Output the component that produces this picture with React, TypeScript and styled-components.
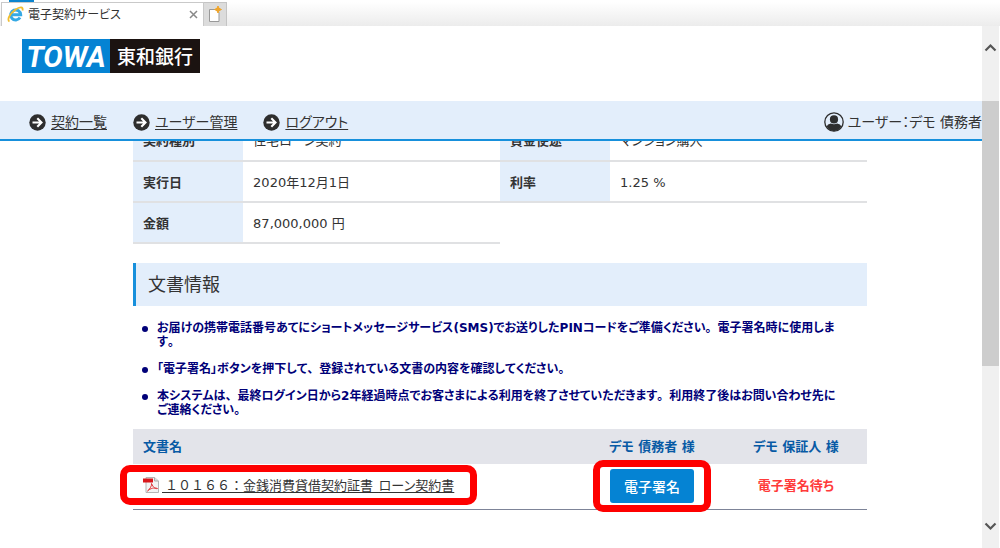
import React from "react";
import styled, { createGlobalStyle } from "styled-components";

const GlobalStyle = createGlobalStyle`
  * { box-sizing: border-box; }
  body {
    margin: 0;
    background: #fff;
    color: #333;
    font-family: "DejaVu Sans", "Noto Sans CJK JP", sans-serif;
    font-feature-settings: "palt";
    font-size: 13px;
    line-height: 16px;
  }
`;

const Browser = styled.div`
  display: flex;
  flex-direction: column;
  min-height: 100vh;
  overflow: hidden;
`;

const TabStrip = styled.div`
  position: relative;
  display: flex;
  align-items: flex-end;
  height: 26px;
  padding-left: 1px;
  background: linear-gradient(#fff 2px, #ececec);
`;

const WindowAccent = styled.span`
  position: absolute;
  top: 0;
  left: 9px;
  width: 25px;
  height: 2px;
  background: #0a84cf;
`;

const Tab = styled.div`
  display: flex;
  align-items: center;
  gap: 4px;
  width: 203px;
  height: 24px;
  padding: 0 5px;
  border: 1px solid #c9c9c9;
  border-bottom: 0;
  background: #fff;
  font-size: 12px;
`;

const TabTitle = styled.span`
  flex: 1;
  white-space: nowrap;
`;

const IconButton = styled.button`
  display: flex;
  align-items: center;
  justify-content: center;
  padding: 0;
  border: 0;
  background: transparent;
`;

const NewTab = styled(IconButton)`
  width: 23px;
  height: 24px;
  border: 1px solid #c4c4c4;
  border-left: 0;
  border-bottom: 0;
  background: #dcdcdc;
`;

const Viewport = styled.div`
  display: flex;
  flex: 1;
`;

const Page = styled.div`
  flex: 1;
  min-width: 0;
`;

const Header = styled.header`
  height: 75px;
  padding: 13px 22px;
`;

const Logo = styled.a`
  display: inline-flex;
  height: 34px;
  color: #fff;
  text-decoration: none;
  white-space: nowrap;
`;

const LogoMark = styled.span`
  width: 88px;
  background: #0583d3;
  font: italic bold 29px/36px Roboto, sans-serif;
  text-align: center;
`;

const LogoName = styled.span`
  width: 90px;
  background: #1b1311;
  font: 500 19px/34px "Noto Sans CJK JP", sans-serif;
  text-align: center;
`;

const Nav = styled.nav`
  position: relative;
  z-index: 1;
  display: flex;
  align-items: center;
  gap: 26px;
  height: 40px;
  padding: 4px 0 0 29px;
  border-bottom: 2px solid #1790dc;
  background: #e3eefb;
  font-size: 14px;
  white-space: nowrap;
`;

const NavLink = styled.a`
  display: flex;
  align-items: center;
  gap: 5px;
  color: #333;
  text-underline-offset: 2px;
`;

const User = styled.div`
  display: flex;
  align-items: center;
  gap: 4px;
  margin-left: auto;
`;

const Content = styled.main`
  margin: -21px 115px 38px 133px;
`;

const InfoTable = styled.table`
  width: 100%;
  border-collapse: collapse;
  table-layout: fixed;
  text-align: left;
`;

const cellLine = "2px solid #e0e1e3";

const Label = styled.th`
  height: 41px;
  padding: 2px 10px 0;
  border-bottom: ${cellLine};
  background: #e3eefb;
  font-weight: bold;
`;

const Value = styled.td`
  padding: 2px 10px 0;
  border-bottom: ${cellLine};
`;

const SectionTitle = styled.h2`
  margin: 19px 0 15px;
  padding: 0 12px;
  border-left: 3px solid #1790dc;
  background: #e3eefb;
  font-size: 18px;
  font-weight: normal;
  line-height: 43px;
`;

const Notes = styled.ul`
  display: flex;
  flex-direction: column;
  gap: 13px;
  margin: 0 0 12px;
  padding: 0;
  list-style: none;
  color: #000078;
  font-feature-settings: "palt", "kern" 0;
  font-kerning: none;
  font-size: 12px;
  font-weight: bold;
  line-height: 14px;
`;

const Note = styled.li`
  display: flex;
  gap: 9px;
  padding-left: 9px;
  white-space: nowrap;

  &::before {
    content: "";
    flex: none;
    width: 6px;
    height: 6px;
    margin-top: 5px;
    border-radius: 50%;
    background: #000078;
  }
`;

const Stop = styled.span`
  font-feature-settings: normal;
`;

const Documents = styled.table`
  width: 100%;
  border-collapse: collapse;
  table-layout: fixed;
  border-bottom: 1px solid #7d8498;
`;

const DocHead = styled.th<{ $width?: string }>`
  width: ${(p) => p.$width ?? "auto"};
  height: 35px;
  padding: 0 10px;
  background: #e3e4ea;
  color: #075aa5;
  text-align: center;
  white-space: nowrap;

  &:first-child { text-align: left; }
`;

const DocCell = styled.td`
  height: 45px;
  padding: 0 10px;
  text-align: center;

  &:first-child {
    padding-bottom: 4px;
    text-align: left;
  }
`;

const Marked = styled.span<{ $x: number; $y: number }>`
  position: relative;
  display: inline-flex;
  vertical-align: middle;

  &::after {
    content: "";
    position: absolute;
    inset: ${(p) => -p.$y}px ${(p) => -p.$x}px;
    border: 7px solid #fe0000;
    border-radius: 10px;
    pointer-events: none;
  }
`;

const DocLink = styled.a`
  display: inline-flex;
  align-items: center;
  gap: 2px;
  color: #333;
  font-family: "Noto Sans CJK JP", sans-serif;
  white-space: pre;
  text-underline-offset: 2px;
`;

const DocName = styled.span`
  text-decoration: underline;
`;

const WideDigits = styled.span`
  font-feature-settings: normal;
`;

const SignButton = styled.button`
  width: 84px;
  height: 34px;
  padding: 0;
  border: 0;
  border-radius: 3px;
  background: #0583d3;
  color: #fff;
  font: 500 14px/34px "Noto Sans CJK JP", sans-serif;
`;

const Pending = styled.strong`
  color: #ff3b3b;
`;

const ScrollBar = styled.div`
  display: flex;
  flex-direction: column;
  justify-content: space-between;
  width: 17px;
  margin-right: 1px;
  background: #f0f0f0;
`;

const ScrollArrow = styled(IconButton)`
  height: 43px;
`;

const ScrollThumb = styled.div`
  height: 265px;
  margin: 32px 0 auto;
  background: #cdcdcd;
`;

const IeIcon = () => (
  <svg width="17" height="17" viewBox="0 0 17 17" fill="none" aria-hidden="true">
    <path d="M13 11.500A5 5 0 1 1 13.700 8.800H4.500" stroke="#35a9e4" strokeWidth="3" />
    <path d="M2.500 15.500C-.5 14 3 7.500 8 4S16.500.5 15.500 4.500" stroke="#f0bd2e" strokeWidth="1.800" />
  </svg>
);

const NewTabIcon = () => (
  <svg width="14" height="17" viewBox="0 0 14 17" aria-hidden="true">
    <path d="M1.500 3.500H8l3 3v9H1.500z" fill="#fff" stroke="#999" />
    <path d="M10 0l1 2.300L13.500 3.500 11 4.700 10 7 9 4.700 6.500 3.500 9 2.300z" fill="#efa52b" stroke="#efa52b" />
  </svg>
);

const ArrowIcon = () => (
  <svg width="17" height="17" viewBox="0 0 17 17" fill="none" aria-hidden="true">
    <circle cx="8.500" cy="8.500" r="8.200" fill="#2e2e2e" />
    <path d="M3.500 8.500H12M8.300 4.300l4.200 4.200-4.200 4.200" stroke="#fff" strokeWidth="2.100" />
  </svg>
);

const UserIcon = () => (
  <svg width="20" height="20" viewBox="0 0 20 20" aria-hidden="true">
    <circle cx="10" cy="10" r="9.200" fill="none" stroke="#2e2e2e" strokeWidth="1.300" />
    <circle cx="10" cy="7.400" r="4.100" fill="#2e2e2e" />
    <path d="M2.600 14.500Q3.500 12 6.800 11.500q3.200 1.600 6.400 0 3.300.5 4.200 3L15 17.600 10 19.200 5 17.600z" fill="#2e2e2e" />
  </svg>
);

const PdfIcon = () => (
  <svg width="17" height="16" viewBox="0 0 17 16" fill="none" aria-hidden="true">
    <path d="M3 .5h8.500L15.500 4v11.500H3z" fill="#f3f3f3" stroke="#b5b5b5" />
    <path d="M11.500.5V4h4" fill="#ddd" stroke="#aaa" />
    <path d="M0 1.500h10v4H0z" fill="#d9161b" />
    <path d="M4.500 14C7 12 9 8.500 8.500 6.500c2 4.500 4 5.500 6 5-3-1.200-7-.3-10 2.500z" stroke="#e0373a" />
  </svg>
);

const Chevron = ({ down = false }: { down?: boolean }) => (
  <svg width="13" height="9" viewBox="0 0 13 9" fill="none" aria-hidden="true">
    <path d={down ? "M1.500 1.500l5 5 5-5" : "M1.500 7.500l5-5 5 5"} stroke="#555" strokeWidth="2.200" />
  </svg>
);

const links = ["契約一覧", "ユーザー管理", "ログアウト"];

export default function App() {
  return (
    <Browser>
      <GlobalStyle />
      <TabStrip>
        <WindowAccent />
        <Tab>
          <IeIcon />
          <TabTitle>電子契約サービス</TabTitle>
          <IconButton aria-label="タブを閉じる">
            <svg width="9" height="9" viewBox="0 0 9 9" aria-hidden="true">
              <path d="M1 1l7 7M8 1L1 8" stroke="#888" strokeWidth="1.500" />
            </svg>
          </IconButton>
        </Tab>
        <NewTab aria-label="新しいタブ"><NewTabIcon /></NewTab>
      </TabStrip>
      <Viewport>
        <Page>
          <Header>
            <Logo href="#">
              <LogoMark>TOWA</LogoMark>
              <LogoName>東和銀行</LogoName>
            </Logo>
          </Header>
          <Nav>
            {links.map((name) => (
              <NavLink href="#" key={name}><ArrowIcon />{name}</NavLink>
            ))}
            <User><UserIcon />ユーザー：デモ 債務者</User>
          </Nav>
          <Content>
            <InfoTable>
              <colgroup>
                <col width="15%" />
                <col width="35%" />
                <col width="15%" />
                <col width="35%" />
              </colgroup>
              <tbody>
                <tr>
                  <Label scope="row">契約種別</Label>
                  <Value>住宅ローン契約</Value>
                  <Label scope="row">資金使途</Label>
                  <Value>マンション購入</Value>
                </tr>
                <tr>
                  <Label scope="row">実行日</Label>
                  <Value>2020年12月1日</Value>
                  <Label scope="row">利率</Label>
                  <Value>1.25 %</Value>
                </tr>
                <tr>
                  <Label scope="row">金額</Label>
                  <Value>87,000,000 円</Value>
                </tr>
              </tbody>
            </InfoTable>
            <SectionTitle>文書情報</SectionTitle>
            <Notes>
              <Note>
                <span>
                  お届けの携帯電話番号あてにショートメッセージサービス(SMS)でお送りしたPINコードをご準備ください<Stop>。</Stop>電子署名時に使用しま
                  <br />
                  す。
                </span>
              </Note>
              <Note>
                <span>「電子署名」ボタンを押下して<Stop>、</Stop>登録されている文書の内容を確認してください。</span>
              </Note>
              <Note>
                <span>
                  本システムは<Stop>、</Stop>最終ログイン日から2年経過時点でお客さまによる利用を終了させていただきます<Stop>。</Stop>利用終了後はお問い合わせ先に
                  <br />
                  ご連絡ください。
                </span>
              </Note>
            </Notes>
            <Documents>
              <thead>
                <tr>
                  <DocHead scope="col">文書名</DocHead>
                  <DocHead scope="col" $width="146px">デモ 債務者 様</DocHead>
                  <DocHead scope="col" $width="142px">デモ 保証人 様</DocHead>
                </tr>
              </thead>
              <tbody>
                <tr>
                  <DocCell>
                    <Marked $x={23} $y={12}>
                      <DocLink href="#">
                        <PdfIcon />
                        <DocName>
                          {" "}<WideDigits>１０１６６：</WideDigits>金銭消費貸借契約証書{"  "}ローン契約書
                        </DocName>
                      </DocLink>
                    </Marked>
                  </DocCell>
                  <DocCell>
                    <Marked $x={17} $y={9}>
                      <SignButton>電子署名</SignButton>
                    </Marked>
                  </DocCell>
                  <DocCell><Pending>電子署名待ち</Pending></DocCell>
                </tr>
              </tbody>
            </Documents>
          </Content>
        </Page>
        <ScrollBar>
          <ScrollArrow aria-label="上へスクロール"><Chevron /></ScrollArrow>
          <ScrollThumb />
          <ScrollArrow aria-label="下へスクロール"><Chevron down /></ScrollArrow>
        </ScrollBar>
      </Viewport>
    </Browser>
  );
}
